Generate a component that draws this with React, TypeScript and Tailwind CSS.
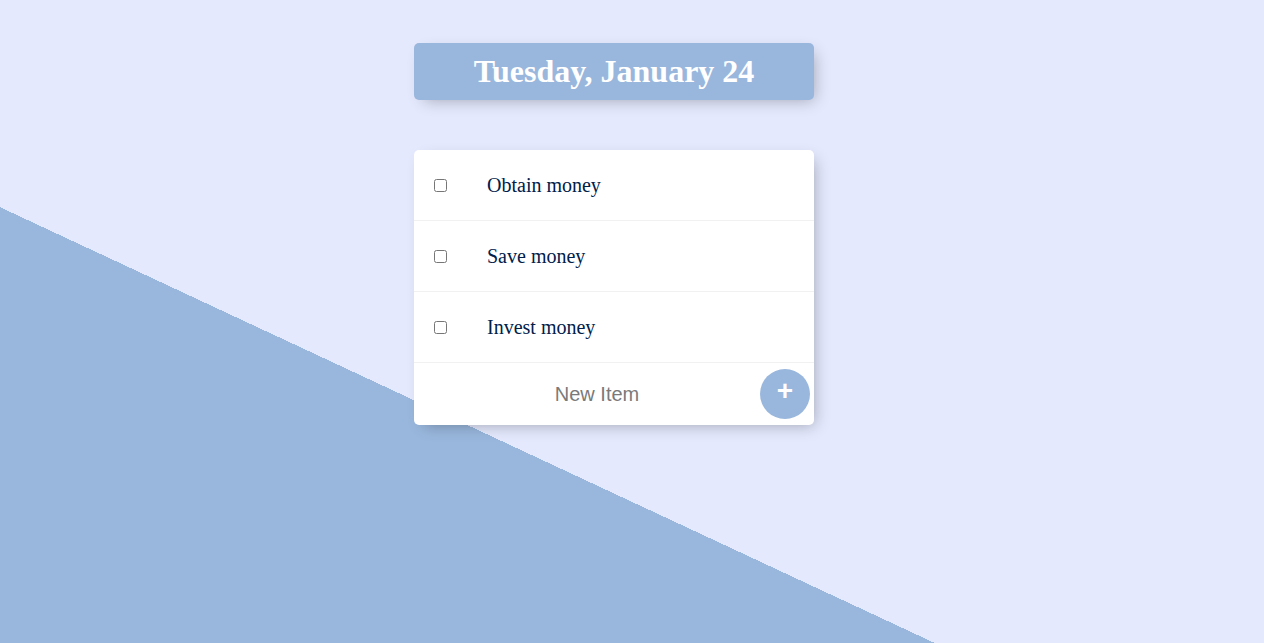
import React from 'react';

interface Item {
    name: string;
}

const items: Item[] = [
    { name: 'Obtain money' },
    { name: 'Save money' },
    { name: 'Invest money' },
];

// single todo row
const Row: React.FC<{ item: Item }> = ({ item }) => {
    return (
        <div className="flex items-center min-h-[70px] border-b border-[#f1f1f1]">
            <input type="checkbox" className="m-[20px] w-[13px] h-[13px]" />
            <p className="m-0 p-[20px] text-[20px] text-[#00204a] font-['Liberation_Serif',serif]">{item.name}</p>
        </div>
    );
};

const App: React.FC = () => {
    return (
        <div className="min-h-screen w-full bg-[#e4e9fd] bg-[linear-gradient(25deg,#99b7dd_395px,#e4e9fd_395px)] flex flex-col items-center pt-[43px] pr-[36px]">
            <div className="w-[400px] rounded-[5px] bg-[#99b7dd] shadow-[5px_5px_15px_-5px_rgba(0,0,0,0.3)] text-center">
                <h1 className="p-[10px] text-[32px] leading-[37px] font-bold text-white font-['Liberation_Serif',serif]">
                    Tuesday, January 24
                </h1>
            </div>

            <div className="mt-[50px] w-[400px] rounded-[5px] bg-white shadow-[5px_5px_15px_-5px_rgba(0,0,0,0.3)]">
                {items.map((item, index) => (
                    <Row key={index} item={item} />
                ))}
                <form className="flex items-center h-[62px] ml-[20px]" onSubmit={(e) => e.preventDefault()}>
                    <input
                        type="text"
                        placeholder="New Item"
                        className="w-[326px] h-[60px] text-center text-[20px] outline-none border-none placeholder:text-[#7a7a7a] font-['Liberation_Sans',Arial,sans-serif]"
                    />
                    <button
                        type="submit"
                        className="w-[50px] h-[50px] rounded-full bg-[#99b7dd] text-white text-[28px] font-bold leading-none pb-[6px] flex items-center justify-center font-['Liberation_Sans',Arial,sans-serif]"
                    >
                        +
                    </button>
                </form>
            </div>
        </div>
    );
};

export default App;
